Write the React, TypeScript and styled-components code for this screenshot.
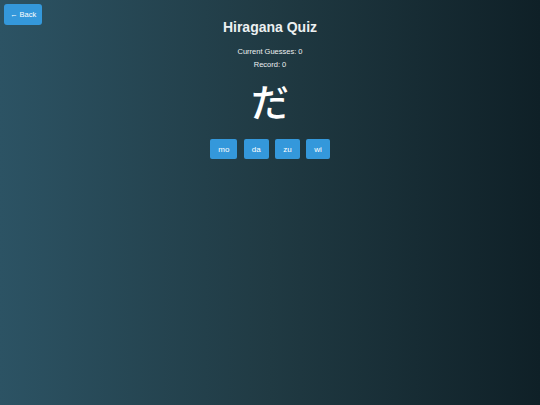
import React, { useState } from 'react';
import styled, { createGlobalStyle } from 'styled-components';

const GlobalStyle = createGlobalStyle`
  html, body {
    margin: 0;
    padding: 0;
    height: 100%;
  }
  body {
    font-family: "Liberation Sans", Arial, sans-serif;
  }
  #root {
    height: 100%;
  }
`;

const Page = styled.div`
  min-height: 100%;
  box-sizing: border-box;
  padding: 4px;
  display: grid;
  grid-template-columns: 1fr auto 1fr;
  align-items: start;
  background: linear-gradient(to right, #2c5364, #203a43, #0f2027);
  color: #ecf0f1;
`;

const BackButton = styled.button`
  justify-self: start;
  height: 21px;
  padding: 0 6px;
  border: none;
  border-radius: 3px;
  background: #3498db;
  color: #ffffff;
  font-family: "Liberation Sans", Arial, sans-serif;
  font-size: 7.5px;
  font-weight: normal;
  cursor: pointer;
`;

const Quiz = styled.main`
  display: flex;
  flex-direction: column;
  align-items: center;
  padding-top: 15px;
`;

const Title = styled.h1`
  margin: 0 0 10px;
  font-size: 14px;
  line-height: 17px;
  font-weight: bold;
  color: #ecf0f1;
`;

const Stat = styled.p`
  margin: 0;
  font-size: 7.5px;
  line-height: 12.5px;
  color: #ecf0f1;
`;

const Kana = styled.div`
  margin-top: 3px;
  font-family: "Noto Sans CJK JP", sans-serif;
  font-size: 38px;
  font-weight: 500;
  line-height: 52px;
  color: #ffffff;
`;

const Options = styled.div`
  display: flex;
  gap: 6.5px;
  margin-top: 13px;
`;

const Option = styled.button`
  height: 20px;
  padding: 0 8px;
  border: none;
  border-radius: 2px;
  background: #3498db;
  color: #ffffff;
  font-family: "Liberation Sans", Arial, sans-serif;
  font-size: 8px;
  font-weight: normal;
  cursor: pointer;
`;

const options = ['mo', 'da', 'zu', 'wi'];

const App: React.FC = () => {
    const [guesses, setGuesses] = useState(0);
    const [record] = useState(0);

    return (
        <>
            <GlobalStyle />
            <Page>
                <BackButton>← Back</BackButton>
                <Quiz>
                    <Title>Hiragana Quiz</Title>
                    <Stat>Current Guesses: {guesses}</Stat>
                    <Stat>Record: {record}</Stat>
                    <Kana>だ</Kana>
                    <Options>
                        {options.map(opt => (
                            <Option key={opt} onClick={() => setGuesses(g => (opt === 'da' ? g + 1 : 0))}>
                                {opt}
                            </Option>
                        ))}
                    </Options>
                </Quiz>
                <div />
            </Page>
        </>
    );
};

export default App;
